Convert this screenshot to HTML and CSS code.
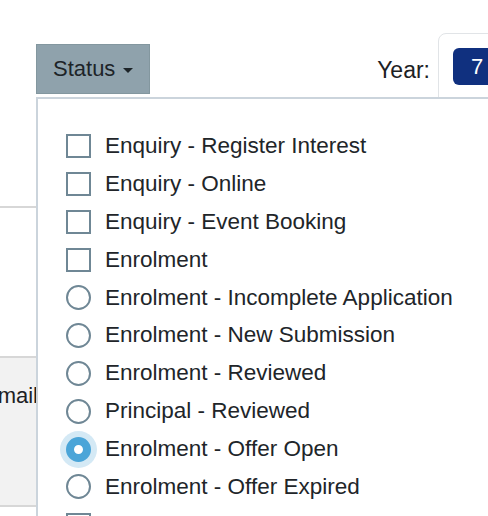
FILE: index.html
```html
<!DOCTYPE html>
<html>
<head>
<meta charset="utf-8">
<link rel="stylesheet" href="styles.css">
</head>
<body>
<div class="page">
  <div class="toolbar">
    <button class="status-btn">Status <span class="caret"></span></button>
    <div class="year-group">
      <span class="year-label">Year:</span>
      <div class="year-box"><span class="badge">7</span></div>
    </div>
  </div>
  <div class="table">
    <div class="row row1"></div>
    <div class="row row2"></div>
    <div class="row row3"><div class="cell"><span>Email</span></div></div>
  </div>
  <div class="dropdown">
    <ul class="menu">
      <li><span class="box"></span>Enquiry - Register Interest</li>
      <li><span class="box"></span>Enquiry - Online</li>
      <li><span class="box"></span>Enquiry - Event Booking</li>
      <li><span class="box"></span>Enrolment</li>
      <li><span class="radio"></span>Enrolment - Incomplete Application</li>
      <li><span class="radio"></span>Enrolment - New Submission</li>
      <li><span class="radio"></span>Enrolment - Reviewed</li>
      <li><span class="radio"></span>Principal - Reviewed</li>
      <li><span class="radio checked"></span>Enrolment - Offer Open</li>
      <li><span class="radio"></span>Enrolment - Offer Expired</li>
      <li><span class="box"></span>Orientation</li>
    </ul>
  </div>
</div>
</body>
</html>
```
FILE: styles.css
```css
html, body {
  margin: 0;
  padding: 0;
  background: #fff;
}
body {
  font-family: "Liberation Sans", Arial, sans-serif;
  color: #212529;
}
.page {
  position: relative;
  width: 488px;
  height: 516px;
  overflow: hidden;
}
.toolbar {
  display: flex;
  align-items: flex-start;
  height: 65px;
  padding: 33px 0 0 36px;
}
.status-btn {
  margin-top: 11px;
  width: 114px;
  height: 50px;
  box-sizing: border-box;
  background: #8fa2ac;
  border: 1px solid #83979f;
  border-radius: 0;
  font-family: inherit;
  font-size: 22px;
  color: #1d2428;
  padding: 0 0 0 16px;
  display: flex;
  align-items: center;
  gap: 8px;
  line-height: 1;
}
.caret {
  display: inline-block;
  width: 0;
  height: 0;
  border-top: 5px solid #1d2428;
  border-left: 5px solid transparent;
  border-right: 5px solid transparent;
  margin-top: 2px;
}
.year-group {
  margin-left: auto;
  margin-right: -50px;
  display: flex;
  align-items: flex-start;
  gap: 8px;
}
.year-label {
  font-size: 23px;
  line-height: 26px;
  margin-top: 24px;
  color: #1d2124;
}
.year-box {
  width: 100px;
  height: 90px;
  box-sizing: border-box;
  border: 1px solid #e1e4e7;
  border-radius: 8px 0 0 0;
  padding: 14px 0 0 14px;
}
.badge {
  display: block;
  width: 60px;
  height: 37px;
  box-sizing: border-box;
  background: #10307f;
  color: #fff;
  border-radius: 6px;
  font-size: 22px;
  line-height: 37px;
  padding-left: 18px;
}
.table {
  display: flex;
  flex-direction: column;
}
.row {
  border-bottom: 2px solid #d7d7d7;
}
.row1 { height: 108px; }
.row2 { height: 148px; }
.row3 {
  height: 147px;
  background: #f2f2f2;
}
.cell {
  width: 38px;
  display: flex;
  justify-content: flex-end;
  padding-top: 25px;
  font-size: 22px;
  line-height: 26px;
  white-space: nowrap;
  color: #1d2124;
}
.dropdown {
  position: absolute;
  left: 36px;
  top: 97px;
  width: 520px;
  height: 500px;
  background: #fff;
  border: 2px solid #cbd4dc;
}
.menu {
  list-style: none;
  margin: 0;
  padding: 28px 0 0 28px;
}
.menu li {
  display: flex;
  align-items: center;
  height: 37.9px;
  font-size: 22.5px;
  color: #212529;
  white-space: nowrap;
}
.menu li::after {
  content: "";
}
.box {
  width: 25px;
  height: 24px;
  box-sizing: border-box;
  border: 2px solid #6f8795;
  margin-right: 14px;
  flex: none;
}
.radio {
  width: 25px;
  height: 25px;
  box-sizing: border-box;
  border: 2px solid #6f8795;
  border-radius: 50%;
  margin-right: 14px;
  flex: none;
}
.radio.checked {
  border: 8px solid #4ba5d8;
  background: #fff;
  box-shadow: 0 0 0 6px #d4e9f5;
}
```
